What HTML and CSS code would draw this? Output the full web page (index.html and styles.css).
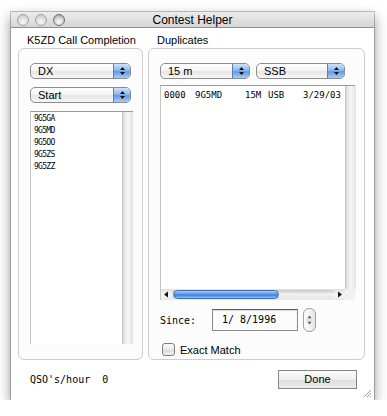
FILE: index.html
```html
<!DOCTYPE html>
<html lang="en">
<head>
  <meta charset="UTF-8">
  <meta name="viewport" content="width=device-width, initial-scale=1.0">
  <title>Contest Helper</title>
  <link rel="stylesheet" href="styles.css">
</head>
<body>
  <div class="window">
    <!-- Title bar -->
    <div class="titlebar">
      <div class="lights">
        <span class="light"></span>
        <span class="light"></span>
        <span class="light light-on"></span>
      </div>
      <div class="title">Contest Helper</div>
      <div></div>
    </div>

    <div class="content">
      <div class="label">K5ZD Call Completion</div>
      <div class="label">Duplicates</div>

      <!-- Call completion -->
      <div class="group group-left">
        <div class="popup popup-left">
          <span class="popup-text">DX</span>
          <span class="popup-arrows"><svg width="7" height="10" viewBox="0 0 7 10"><path d="M3.5 1L6 4H1Z M3.5 9L6 6H1Z" fill="#111"/></svg></span>
        </div>
        <div class="popup popup-left">
          <span class="popup-text">Start</span>
          <span class="popup-arrows"><svg width="7" height="10" viewBox="0 0 7 10"><path d="M3.5 1L6 4H1Z M3.5 9L6 6H1Z" fill="#111"/></svg></span>
        </div>
        <div class="call-list">
          <ul class="calls">
            <li>9G5GA</li>
            <li>9G5MD</li>
            <li>9G5OO</li>
            <li>9G5ZS</li>
            <li>9G5ZZ</li>
          </ul>
          <div class="vscroll"></div>
        </div>
      </div>

      <!-- Duplicates -->
      <div class="group group-right">
        <div class="popup-row">
          <div class="popup popup-band">
            <span class="popup-text">15 m</span>
            <span class="popup-arrows"><svg width="7" height="10" viewBox="0 0 7 10"><path d="M3.5 1L6 4H1Z M3.5 9L6 6H1Z" fill="#111"/></svg></span>
          </div>
          <div class="popup popup-mode">
            <span class="popup-text">SSB</span>
            <span class="popup-arrows"><svg width="7" height="10" viewBox="0 0 7 10"><path d="M3.5 1L6 4H1Z M3.5 9L6 6H1Z" fill="#111"/></svg></span>
          </div>
        </div>

        <div class="dup-list">
          <div class="dup-rows">
            <div class="dup-row">
              <span class="col-time">0000</span>
              <span class="col-call">9G5MD</span>
              <span class="col-band">15M</span>
              <span class="col-mode">USB</span>
              <span>3/29/03</span>
            </div>
          </div>
          <div class="vscroll"></div>
          <div class="hscroll">
            <span class="scroll-arrow"><svg width="6" height="7" viewBox="0 0 6 7"><path d="M1 3.5L5 0.5V6.5Z" fill="#111"/></svg></span>
            <div class="track"><div class="thumb"></div></div>
            <span class="scroll-arrow"><svg width="6" height="7" viewBox="0 0 6 7"><path d="M5 3.5L1 0.5V6.5Z" fill="#111"/></svg></span>
          </div>
          <div class="corner"></div>
        </div>

        <div class="since-row">
          <span class="since-label">Since:</span>
          <div class="date-field">1/ 8/1996</div>
          <div class="stepper"><svg width="13" height="24" viewBox="0 0 13 24"><path d="M6.5 7L9 10H4Z M6.5 17L9 14H4Z" fill="#555"/><path d="M3 12H10" stroke="#c8c8c8" stroke-width="1"/></svg></div>
        </div>

        <label class="check-row"><span class="checkbox"></span>Exact Match</label>
      </div>
    </div>

    <div class="footer">
      <span class="rate">QSO's/hour  0</span>
      <div class="button">Done</div>
    </div>

    <svg class="grip" width="9" height="9" viewBox="0 0 9 9">
      <path d="M8 1L1 8 M8 4L4 8 M8 7L7 8" stroke="#999" stroke-width="1"/>
    </svg>
  </div>
</body>
</html>
```

FILE: styles.css
```css
body {
  margin: 0;
  padding: 12px 0 0 11px;
  background: #fff;
  font-family: 'Liberation Sans', Arial, sans-serif;
  color: #000;
}

.window {
  position: relative;
  width: 363px;
  height: 388px;
  background: #fff;
  box-shadow: 0 0 0 1px rgba(0, 0, 0, 0.22), 0 5px 12px rgba(0, 0, 0, 0.45);
}

.titlebar {
  height: 15px;
  display: grid;
  grid-template-columns: 1fr auto 1fr;
  align-items: center;
  background: linear-gradient(#ececec, #d6d6d6);
  border-bottom: 1px solid #8f8f8f;
}

.lights {
  display: flex;
  gap: 6px;
  padding-left: 6px;
}

.light {
  width: 12px;
  height: 12px;
  border-radius: 50%;
  border: 1px solid #a6a6a6;
  box-sizing: border-box;
  background: radial-gradient(circle at 50% 70%, #fafafa, #d8d8d8 60%, #bdbdbd);
}

.light-on {
  border-color: #6f6f6f;
  background: radial-gradient(circle at 50% 70%, #fff, #d0d0d0 55%, #8a8a8a);
}

.title {
  font-size: 12px;
}

.content {
  display: grid;
  grid-template-columns: 125px 217px;
  column-gap: 5px;
  row-gap: 2px;
  padding: 6px 0 0 7px;
}

.label {
  font-size: 11px;
  line-height: 12px;
  padding-left: 9px;
}

.group {
  box-sizing: border-box;
  height: 312px;
  border: 1px solid #cdcdcd;
  border-radius: 6px;
  padding: 14px 0 0 11px;
  background: #fcfcfc;
}

/* pop-up buttons */
.popup {
  box-sizing: border-box;
  height: 16px;
  display: flex;
  align-items: stretch;
  border: 1px solid #8c8c8c;
  border-radius: 5px;
  overflow: hidden;
  background: linear-gradient(#fff, #f3f3f3 50%, #e6e6e6 51%, #f6f6f6);
  font-size: 11px;
}

.popup-left {
  width: 101px;
  margin-bottom: 8px;
}

.popup-text {
  flex: 1;
  padding-left: 7px;
  line-height: 14px;
}

.popup-arrows {
  width: 16px;
  display: flex;
  align-items: center;
  justify-content: center;
  border-left: 1px solid #5d7fb3;
  background: linear-gradient(#cfe3f9, #8db8ee 45%, #5e9be6 55%, #a6cdf6);
}

.popup-row {
  display: flex;
  gap: 6px;
}

.popup-band {
  width: 90px;
}

.popup-mode {
  width: 89px;
}

/* lists */
.call-list {
  margin-top: 4px;
  width: 103px;
  height: 233px;
  box-sizing: border-box;
  display: flex;
  border-top: 1px solid #9a9a9a;
  border-left: 1px solid #c3c3c3;
  background: #fff;
}

.calls {
  flex: 1;
  margin: 0;
  padding: 1px 0 0 3px;
  list-style: none;
  font-family: 'DejaVu Sans Mono', monospace;
  font-size: 8px;
  letter-spacing: -0.7px;
  line-height: 12px;
  color: #000;
}

.vscroll {
  width: 11px;
  background: linear-gradient(to right, #bdbdbd, #e6e6e6 20%, #f7f7f7 55%, #e2e2e2);
}

.dup-list {
  margin-top: 6px;
  width: 195px;
  height: 215px;
  box-sizing: border-box;
  display: grid;
  grid-template-columns: 1fr 10px;
  grid-template-rows: 1fr 11px;
  border-top: 1px solid #9a9a9a;
  border-left: 1px solid #c3c3c3;
  background: #fff;
}

.dup-rows {
  padding: 3px 0 0 3px;
  font-family: 'DejaVu Sans Mono', monospace;
  font-size: 9px;
  line-height: 12px;
}

.dup-row {
  display: flex;
  white-space: pre;
}

.col-time { width: 31px; }
.col-call { width: 50px; }
.col-band { width: 23px; }
.col-mode { width: 35px; }

.hscroll {
  display: flex;
  align-items: center;
  background: linear-gradient(#e0e0e0, #f6f6f6 50%, #e8e8e8);
}

.scroll-arrow {
  width: 10px;
  display: flex;
  justify-content: center;
}

.track {
  flex: 1;
  height: 9px;
  border-radius: 5px;
  background: linear-gradient(#c9c9c9, #f2f2f2 50%, #e4e4e4);
}

.thumb {
  width: 106px;
  height: 9px;
  margin-left: 2px;
  box-sizing: border-box;
  border-radius: 5px;
  border: 1px solid #3f6fb5;
  background: linear-gradient(#a9cdf5, #5c98e3 45%, #3a7fdb 55%, #8cc0f4);
}

.corner {
  background: #f2f2f2;
}

/* since */
.since-row {
  margin-top: 8px;
  display: flex;
  align-items: center;
  height: 24px;
}

.since-label,
.date-field,
.rate {
  font-family: 'DejaVu Sans Mono', monospace;
  font-size: 10px;
}

.since-label {
  width: 52px;
}

.date-field {
  box-sizing: border-box;
  width: 86px;
  height: 22px;
  line-height: 20px;
  padding-left: 9px;
  border: 1px solid #8a8a8a;
  border-top-color: #5e5e5e;
  box-shadow: inset 0 1px 1px rgba(0, 0, 0, 0.15);
}

.stepper {
  margin-left: 5px;
  width: 13px;
  height: 24px;
  box-sizing: border-box;
  border: 1px solid #a0a0a0;
  border-radius: 6px;
  background: linear-gradient(to right, #fff, #e6e6e6);
  display: flex;
  align-items: center;
  justify-content: center;
  overflow: hidden;
}

.check-row {
  margin-top: 11px;
  display: flex;
  align-items: center;
  gap: 5px;
  padding-left: 2px;
  font-size: 11px;
}

.checkbox {
  width: 13px;
  height: 13px;
  box-sizing: border-box;
  border: 1px solid #7d7d7d;
  border-radius: 3px;
  background: linear-gradient(#fdfdfd, #e9e9e9 50%, #d9d9d9 51%, #f0f0f0);
}

/* footer */
.footer {
  margin-top: 10px;
  display: flex;
  align-items: center;
  justify-content: space-between;
  padding: 0 17px 0 19px;
}

.rate {
  white-space: pre;
}

.button {
  box-sizing: border-box;
  width: 79px;
  height: 19px;
  line-height: 17px;
  text-align: center;
  font-size: 11px;
  border: 1px solid #858585;
  background: linear-gradient(#fcfcfc, #eeeeee 50%, #dedede 51%, #ececec);
}

.grip {
  position: absolute;
  right: 2px;
  bottom: 2px;
}
```
